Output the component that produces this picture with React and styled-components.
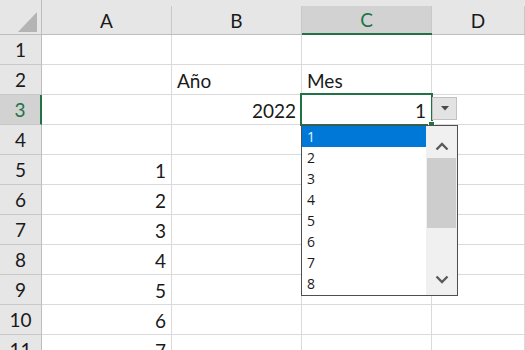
import React from 'react';
import styled, { createGlobalStyle } from 'styled-components';

const GREEN = '#217346';

const columns = ['A', 'B', 'C', 'D'];

const data = [
  ['', '', '', ''],
  ['', 'Año', 'Mes', ''],
  ['', 2022, 1, ''],
  ['', '', '', ''],
  [1, '', '', ''],
  [2, '', '', ''],
  [3, '', '', ''],
  [4, '', '', ''],
  [5, '', '', ''],
  [6, '', '', ''],
  [7, '', '', ''],
];

const options = [1, 2, 3, 4, 5, 6, 7, 8];

const App = () => {
  return (
    <>
      <GlobalStyle />
      <Sheet>
        <Corner>
          <svg width="42" height="35" viewBox="0 0 42 35">
            <polygon points="18,32 37,32 37,12" fill="#b4b4b4" />
          </svg>
        </Corner>
        {columns.map((col) => (
          <ColHeader key={col} $active={col === 'C'}>
            <span>{col}</span>
          </ColHeader>
        ))}

        {data.map((row, r) => (
          <React.Fragment key={r}>
            <RowHeader $active={r === 2}>{r + 1}</RowHeader>
            {row.map((value, c) => {
              const isActive = r === 2 && c === 2;
              return (
                <Cell key={c} $num={typeof value === 'number'} $active={isActive}>
                  {value}
                  {isActive && (
                    <>
                      <Selection>
                        <FillHandle />
                      </Selection>
                      <DropButton>
                        <svg width="8" height="5" viewBox="0 0 8 5">
                          <polygon points="0,0 8,0 4,4.5" fill="#4a4a4a" />
                        </svg>
                      </DropButton>
                      <ListBox>
                        <Options>
                          {options.map((o) => (
                            <Option key={o} $selected={o === 1}>{o}</Option>
                          ))}
                        </Options>
                        <ScrollBar>
                          <ScrollArrow $up>
                            <svg width="14" height="9" viewBox="0 0 14 9">
                              <polyline points="1.5,7.5 7,2 12.5,7.5" fill="none" stroke="#5a5a5a" strokeWidth="2.4" />
                            </svg>
                          </ScrollArrow>
                          <Thumb />
                          <Track />
                          <ScrollArrow>
                            <svg width="14" height="9" viewBox="0 0 14 9">
                              <polyline points="1.5,1.5 7,7 12.5,1.5" fill="none" stroke="#5a5a5a" strokeWidth="2.4" />
                            </svg>
                          </ScrollArrow>
                        </ScrollBar>
                      </ListBox>
                    </>
                  )}
                </Cell>
              );
            })}
          </React.Fragment>
        ))}
      </Sheet>
    </>
  );
};

export default App;

const GlobalStyle = createGlobalStyle`
  html, body {
    margin: 0;
    padding: 0;
    background: #ffffff;
    overflow: hidden;
  }
  body {
    font-family: Lato, "Liberation Sans", sans-serif;
  }
`;

const Sheet = styled.div`
  display: grid;
  grid-template-columns: 42px 130px 130px 130px 1fr;
  grid-template-rows: 35px;
  grid-auto-rows: 30px;
  width: 525px;
  height: 350px;
  overflow: hidden;
  font-size: 19px;
  color: #1a1a1a;
`;

const Corner = styled.div`
  background: #e6e6e6;
  border-right: 1px solid #bdbdbd;
  border-bottom: 1px solid #bdbdbd;
  box-sizing: border-box;
  line-height: 0;
`;

const ColHeader = styled.div`
  background: #e6e6e6;
  padding-top: 6px;
  box-sizing: border-box;
  border-bottom: ${(p) => (p.$active ? `2px solid ${GREEN}` : '1px solid #bdbdbd')};

  span {
    display: flex;
    align-items: center;
    justify-content: center;
    height: 100%;
    line-height: 19px;
    background: ${(p) => (p.$active ? '#d2d2d2' : 'transparent')};
    color: ${(p) => (p.$active ? GREEN : '#1a1a1a')};
    border-right: 1px solid #c8c8c8;
    box-sizing: border-box;
  }
`;

const RowHeader = styled.div`
  display: flex;
  align-items: center;
  justify-content: center;
  line-height: 19px;
  box-sizing: border-box;
  background: ${(p) => (p.$active ? '#d2d2d2' : '#e6e6e6')};
  color: ${(p) => (p.$active ? GREEN : '#1a1a1a')};
  border-bottom: 1px solid #c8c8c8;
  border-right: ${(p) => (p.$active ? `2px solid ${GREEN}` : '1px solid #bdbdbd')};
`;

const Cell = styled.div`
  position: relative;
  display: flex;
  align-items: center;
  justify-content: ${(p) => (p.$num ? 'flex-end' : 'flex-start')};
  padding: 1px 5px 0;
  line-height: 19px;
  box-sizing: border-box;
  border-right: 1px solid #dadada;
  border-bottom: 1px solid #dadada;
  background: #ffffff;
`;

const Selection = styled.div`
  position: absolute;
  top: -2px;
  left: -2px;
  right: -2px;
  bottom: -2px;
  border: 2px solid ${GREEN};
  pointer-events: none;
  z-index: 3;
`;

const FillHandle = styled.div`
  position: absolute;
  right: -4px;
  bottom: -4px;
  width: 5px;
  height: 5px;
  background: ${GREEN};
  border: 1px solid #ffffff;
`;

const DropButton = styled.div`
  position: absolute;
  left: calc(100% + 1px);
  top: 2px;
  width: 25px;
  height: 23px;
  box-sizing: border-box;
  display: flex;
  align-items: center;
  justify-content: center;
  background: #e3e3e3;
  border: 1px solid #c2c2c2;
  z-index: 3;
`;

const ListBox = styled.div`
  position: absolute;
  top: calc(100% + 1px);
  left: -1px;
  width: 157px;
  height: 171px;
  box-sizing: border-box;
  display: flex;
  background: #ffffff;
  border: 1px solid #4f4f4f;
  z-index: 4;
`;

const Options = styled.div`
  flex: 1;
  display: flex;
  flex-direction: column;
  font-family: "Open Sans", "Noto Sans", sans-serif;
  font-size: 14px;
  overflow: hidden;
`;

const Option = styled.div`
  flex: 0 0 21px;
  display: flex;
  align-items: center;
  padding-left: 5px;
  background: ${(p) => (p.$selected ? '#0078d7' : 'transparent')};
  color: ${(p) => (p.$selected ? '#e8f0ff' : '#1a1a1a')};
`;

const ScrollBar = styled.div`
  width: 31px;
  display: flex;
  flex-direction: column;
  align-items: center;
  background: #f0f0f0;
`;

const ScrollArrow = styled.div`
  flex: 0 0 32px;
  box-sizing: border-box;
  padding-top: ${(p) => (p.$up ? '8px' : '0')};
  display: flex;
  align-items: center;
  justify-content: center;
`;

const Thumb = styled.div`
  flex: 0 0 70px;
  width: 29px;
  background: #cdcdcd;
`;

const Track = styled.div`
  flex: 1;
`;
